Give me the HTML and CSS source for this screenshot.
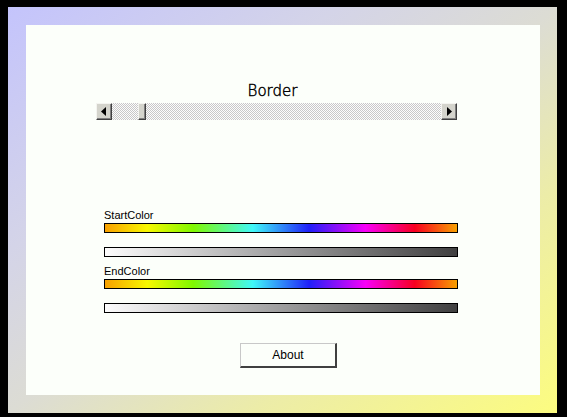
FILE: index.html
```html
<!DOCTYPE html>
<html>
<head>
<meta charset="utf-8">
<link rel="stylesheet" href="styles.css">
</head>
<body>
<div class="frame">
  <div class="panel">
    <div class="title">Border</div>
    <div class="scrollbar">
      <div class="sbtn"><svg width="6" height="9" viewBox="0 0 6 9"><path d="M5 0V9L0 4.5Z" fill="#000"/></svg></div>
      <div class="track">
        <div class="gap"></div>
        <div class="thumb"></div>
      </div>
      <div class="sbtn"><svg width="6" height="9" viewBox="0 0 6 9"><path d="M1 0V9L6 4.5Z" fill="#000"/></svg></div>
    </div>
    <div class="colors">
      <div class="label first">StartColor</div>
      <div class="bar rainbow"></div>
      <div class="bar gray"></div>
      <div class="label">EndColor</div>
      <div class="bar rainbow"></div>
      <div class="bar gray"></div>
    </div>
    <div class="btnrow"><button class="about">About</button></div>
  </div>
</div>
</body>
</html>
```
FILE: styles.css
```css
html, body { margin: 0; padding: 0; }
body {
  background: #000;
  width: 567px;
  height: 417px;
  overflow: hidden;
  font-family: "Liberation Sans", Arial, sans-serif;
}
.frame {
  margin: 7px 0 0 8px;
  width: 549px;
  height: 406px;
  box-sizing: border-box;
  padding: 18px 17px 18px 18px;
  background: linear-gradient(to bottom right, #c4c4fc 0%, #d4d4e8 30%, #dcdcd4 50%, #ececa8 72%, #fcfc80 100%);
}
.panel {
  background: #fcfffa;
  height: 370px;
  display: flex;
  flex-direction: column;
}
.title {
  margin: 57px 0 0 70px;
  width: 353px;
  text-align: center;
  font-family: "DejaVu Sans", sans-serif;
  font-size: 15px;
  font-weight: 300;
  -webkit-text-stroke: 0.45px #000;
  line-height: 18px;
  color: #000;
}
.scrollbar {
  margin: 3px 0 0 70px;
  width: 361px;
  height: 17px;
  display: flex;
}
.sbtn {
  width: 16px;
  height: 17px;
  box-sizing: border-box;
  background: #d4d4cc;
  border-top: 1px solid #f4f4f0;
  border-left: 1px solid #f4f4f0;
  border-right: 1px solid #404040;
  border-bottom: 1px solid #404040;
  box-shadow: inset -1px -1px 0 #808080;
  display: flex;
  align-items: center;
  justify-content: center;
}
.track {
  flex: 1;
  display: flex;
  background: repeating-conic-gradient(#c8c8c8 0 25%, #fcfcfc 0 50%) 0 0 / 2px 2px;
}
.gap { width: 26px; }
.thumb {
  width: 8px;
  box-sizing: border-box;
  background: #d4d4cc;
  border-top: 1px solid #f4f4f0;
  border-left: 1px solid #f4f4f0;
  border-right: 1px solid #404040;
  border-bottom: 1px solid #404040;
  box-shadow: inset -1px -1px 0 #808080;
}
.colors {
  margin-left: 78px;
  width: 354px;
  display: flex;
  flex-direction: column;
}
.label {
  font-size: 11px;
  line-height: 13px;
  color: #000;
  margin-top: 8px;
  height: 14px;
}
.label.first { margin-top: 89px; }
.bar {
  height: 10px;
  box-sizing: border-box;
  border: 1px solid #000;
}
.rainbow {
  background: linear-gradient(to right, #f8a000 0%, #f8f800 12%, #80f800 25%, #40f8f8 42%, #2020f8 58%, #f800f8 74%, #f80020 88%, #f8a000 100%);
}
.gray {
  margin-top: 14px;
  background: linear-gradient(to right, #fcfcfc 0%, #404040 100%);
}
.btnrow {
  margin: 30px 0 0 214px;
}
.about {
  width: 97px;
  height: 25px;
  box-sizing: border-box;
  background: #fcfffa;
  border-top: 1px solid #c8c8c8;
  border-left: 1px solid #c8c8c8;
  border-right: 2px solid #404040;
  border-bottom: 2px solid #404040;
  font-family: "Liberation Sans", Arial, sans-serif;
  font-size: 12px;
  color: #000;
  padding: 0;
}
```
